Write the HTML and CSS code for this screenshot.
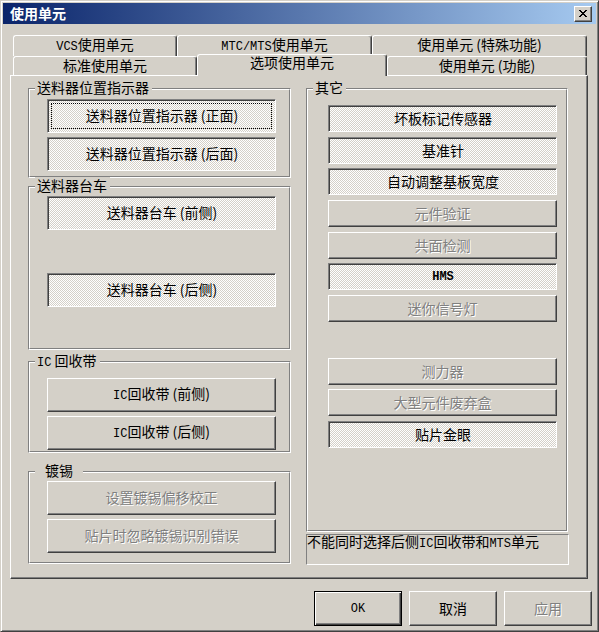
FILE: index.html
```html
<!DOCTYPE html>
<html lang="zh-CN">
<head>
  <meta charset="UTF-8"/>
  <title>使用单元</title>
  <link rel="stylesheet" href="styles.css">
</head>
<body>
  <div class="window">
    <div class="titlebar">
      <span class="title">使用单元</span>
      <div class="close">
        <svg width="8" height="7" viewBox="0 0 8 7" shape-rendering="crispEdges">
          <path d="M0 0h2v1H0z M6 0h2v1H6z M1 1h2v1H1z M5 1h2v1H5z M2 2h4v1H2z M3 3h2v1H3z M2 4h4v1H2z M1 5h2v1H1z M5 5h2v1H5z M0 6h2v1H0z M6 6h2v1H6z"/>
        </svg>
      </div>
    </div>

    <div class="tabs">
      <div class="tab-row back">
        <div class="tab w164"><span class="lat">VCS</span>使用单元</div>
        <div class="tab w195"><span class="lat">MTC/MTS</span>使用单元</div>
        <div class="tab w215">使用单元 (特殊功能)</div>
      </div>
      <div class="tab-row front">
        <div class="tab w184">标准使用单元</div>
        <div class="tab w190 active">选项使用单元</div>
        <div class="tab w200">使用单元 (功能)</div>
      </div>

      <div class="panel">
        <!-- 左列 -->
        <div class="col">
          <div class="group g1">
            <div class="group-in">
              <div class="group-title">送料器位置指示器</div>
              <button class="btn big on focus">送料器位置指示器 (正面)</button>
              <button class="btn big on">送料器位置指示器 (后面)</button>
            </div>
          </div>
          <div class="group g2">
            <div class="group-in">
              <div class="group-title">送料器台车</div>
              <button class="btn big on m3">送料器台车 (前侧)</button>
              <button class="btn big on m43">送料器台车 (后侧)</button>
            </div>
          </div>
          <div class="group g3">
            <div class="group-in">
              <div class="group-title"><span class="lat">IC</span> 回收带</div>
              <button class="btn big m7"><span class="lat">IC</span>回收带 (前侧)</button>
              <button class="btn big"><span class="lat">IC</span>回收带 (后侧)</button>
            </div>
          </div>
          <div class="group g4">
            <div class="group-in">
              <div class="group-title wide">镀锡</div>
              <button class="btn big m3" disabled>设置镀锡偏移校正</button>
              <button class="btn big" disabled>贴片时忽略镀锡识别错误</button>
            </div>
          </div>
        </div>

        <!-- 右列 -->
        <div class="col right">
          <div class="group other">
            <div class="group-in">
              <div class="group-title">其它</div>
              <button class="btn slim on m10">坏板标记传感器</button>
              <button class="btn slim on m5">基准针</button>
              <button class="btn slim on">自动调整基板宽度</button>
              <button class="btn slim m5" disabled>元件验证</button>
              <button class="btn slim m5" disabled>共面检测</button>
              <button class="btn slim on"><span class="lat strong">HMS</span></button>
              <button class="btn slim m5" disabled>迷你信号灯</button>
              <button class="btn slim m36" disabled>测力器</button>
              <button class="btn slim" disabled>大型元件废弃盒</button>
              <button class="btn slim on m5">贴片金眼</button>
            </div>
          </div>
          <div class="msg">不能同时选择后侧<span class="lat">IC</span>回收带和<span class="lat">MTS</span>单元</div>
        </div>
      </div>
    </div>

    <div class="dlg-buttons">
      <button class="btn dlg default"><span class="lat">OK</span></button>
      <button class="btn dlg">取消</button>
      <button class="btn dlg" disabled>应用</button>
    </div>
  </div>
</body>
</html>
```

FILE: styles.css
```css
body {
  margin: 0;
  background: #d4d0c8;
  font-family: "Noto Sans CJK SC", sans-serif;
  font-size: 14px;
  line-height: 16px;
  color: #000;
}
.window {
  width: 599px;
  height: 632px;
  box-sizing: border-box;
  padding: 2px;
  background: #d4d0c8;
  border: 1px solid;
  border-color: #d4d0c8 #404040 #404040 #d4d0c8;
  box-shadow: inset 1px 1px #fff, inset -1px -1px #808080;
}
.titlebar {
  height: 21px;
  display: flex;
  align-items: center;
  justify-content: space-between;
  padding: 0 4px 0 7px;
  background: linear-gradient(to right, #0a246a, #a6caf0);
  color: #fff;
  font-weight: bold;
}
.title {
  padding-bottom: 1px;
}
.close {
  width: 18px;
  height: 16px;
  box-sizing: border-box;
  display: flex;
  align-items: center;
  justify-content: center;
  background: #d4d0c8;
  border: 1px solid;
  border-color: #fff #404040 #404040 #fff;
  box-shadow: inset -1px -1px #808080;
}
.lat {
  font-family: "Liberation Mono", monospace;
  font-size: 12px;
}
.lat.strong {
  font-weight: bold;
}

/* tabs */
.tabs {
  margin: 11px 0 0 7px;
  width: 578px;
}
.tab-row {
  display: flex;
  padding-left: 3px;
}
.tab-row.back {
  height: 21px;
}
.tab-row.front {
  height: 19px;
  align-items: flex-end;
}
.tab {
  box-sizing: border-box;
  height: 100%;
  text-align: center;
  white-space: nowrap;
  background: #d4d0c8;
  border: 1px solid;
  border-bottom: none;
  border-color: #fff #404040 #404040 #fff;
  border-radius: 3px 3px 0 0;
  box-shadow: inset -1px 0 #808080;
}
.tab.active {
  height: 22px;
  margin-bottom: -1px;
  line-height: 14px;
  position: relative;
  z-index: 1;
}
.w164 { width: 164px; }
.w184 { width: 184px; }
.w190 { width: 190px; }
.w195 { width: 195px; }
.w200 { width: 200px; }
.w215 { width: 215px; }

.panel {
  box-sizing: border-box;
  height: 504px;
  padding: 12px 0 0 17px;
  display: flex;
  gap: 15px;
  align-items: flex-start;
  border: 1px solid;
  border-color: #fff #404040 #404040 #fff;
  box-shadow: inset -1px -1px #808080;
}
.col {
  width: 263px;
  display: flex;
  flex-direction: column;
}
.col.right {
  width: 262px;
}

/* group boxes */
.group {
  box-sizing: border-box;
  border: 1px solid;
  border-color: #808080 #fff #fff #808080;
}
.group-in {
  box-sizing: border-box;
  height: 100%;
  display: flex;
  flex-direction: column;
  align-items: flex-start;
  border: 1px solid;
  border-color: #fff #808080 #808080 #fff;
}
.group-title {
  margin: -11px 0 0 5px;
  padding: 0 3px 0 2px;
  background: #d4d0c8;
  white-space: nowrap;
}
.group-title.wide {
  padding: 0 10px;
}
.g1 { height: 90px; }
.g2 { height: 164px; margin-top: 8px; }
.g3 { height: 92px; margin-top: 11px; }
.g4 { height: 93px; margin-top: 18px; }
.other { height: 444px; }

.msg {
  box-sizing: border-box;
  width: 263px;
  height: 31px;
  margin-top: 2px;
  line-height: 13px;
  border: 1px solid;
  border-color: #808080 #fff #fff #808080;
  white-space: nowrap;
}

/* buttons */
.btn {
  box-sizing: border-box;
  font: inherit;
  color: #000;
  padding: 0 0 2px;
  margin: 0;
  text-align: center;
  white-space: nowrap;
  background: #d4d0c8;
  border: 1px solid;
  border-color: #fff #404040 #404040 #fff;
  box-shadow: inset -1px -1px #808080;
}
.group-in .btn {
  margin-top: 4px;
}
.btn.big {
  width: 229px;
  height: 34px;
  margin-left: 17px;
}
.btn.slim {
  width: 229px;
  height: 27px;
  margin-left: 20px;
}
.btn.on {
  padding: 0 0 2px 1px;
  border-color: #808080 #fff #fff #808080;
  box-shadow: inset 1px 1px #404040;
  background-image: repeating-conic-gradient(#fff 0 25%, #d4d0c8 0 50%);
  background-size: 2px 2px;
}
.btn.focus {
  outline: 1px dotted #000;
  outline-offset: -5px;
}
.btn:disabled {
  color: #808080;
  text-shadow: 1px 1px 0 #fff;
}
.group-in .m3 { margin-top: 3px; }
.group-in .m5 { margin-top: 5px; }
.group-in .m7 { margin-top: 7px; }
.group-in .m10 { margin-top: 10px; }
.group-in .m36 { margin-top: 36px; }
.group-in .m43 { margin-top: 43px; }

.dlg-buttons {
  display: flex;
  justify-content: flex-end;
  gap: 7px;
  margin-top: 12px;
  padding-right: 4px;
}
.btn.dlg {
  width: 88px;
  height: 35px;
}
.btn.default {
  border-color: #000;
  box-shadow: inset 1px 1px #fff, inset -1px -1px #404040, inset -2px -2px #808080;
}
```
